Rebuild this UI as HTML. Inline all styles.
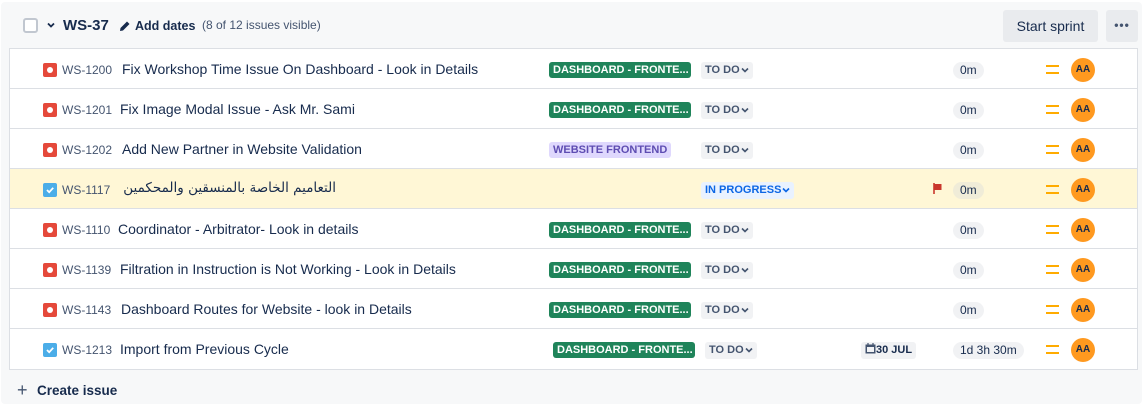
<!DOCTYPE html>
<html><head><meta charset="utf-8"><style>
*{box-sizing:border-box;margin:0;padding:0}
body{width:1142px;height:404px;background:#fff;font-family:"Liberation Sans","DejaVu Sans",sans-serif;color:#172b4d;position:relative;overflow:hidden}
.wrap{position:absolute;left:1px;top:2px;width:1141px;height:402px;background:#f7f8f9;border-radius:4px}
.a{position:absolute;white-space:nowrap}
.tbl{position:absolute;left:9px;top:48px;width:1129px;height:322px;border:1px solid #dcdfe4;background:#fff}
.row{position:absolute;left:0;width:1127px;height:40px;border-bottom:1px solid #dcdfe4;white-space:nowrap}
.row.hl{background:#fff7d6}
.bug{position:absolute;left:33px;top:14px;width:14px;height:14px;background:#e5493a;border-radius:2px}
.bug:after{content:"";position:absolute;left:4px;top:4px;width:6px;height:6px;border-radius:50%;background:#fff}
.task{position:absolute;left:33px;top:14px;width:14px;height:14px;background:#4bade8;border-radius:2px}
.task svg{position:absolute;left:2px;top:2px}
.key{position:absolute;left:52px;top:14px;font-size:12px;color:#44546f}
.sum{position:absolute;top:12px;font-size:14px;color:#172b4d;white-space:nowrap}
.lbl{position:absolute;top:13px;height:16px;line-height:16px;font-size:11px;font-weight:bold;padding:0 4px;border-radius:3px;white-space:nowrap;overflow:hidden}
.g{background:#1f845a;color:#fff;width:142px}
.p{background:#dfd8fd;color:#5e4db2}
.st{position:absolute;top:13px;height:17px;line-height:17px;font-size:11px;font-weight:bold;padding:0 4px;border-radius:3px;background:#f1f2f4;color:#44546f;white-space:nowrap}
.st.ip{background:#e9f2ff;color:#0c66e4}
.st svg{vertical-align:0px;margin-left:1px}
.time{position:absolute;left:943px;top:13px;height:17px;line-height:17px;font-size:12px;padding:0 7px;border-radius:9px;background:#f1f2f4;color:#172b4d}
.hl .time{background:#f0ecd8}
.pri{position:absolute;left:1036px;top:16px;width:13px;height:9px;border-top:2.5px solid #ffab00;border-bottom:2.5px solid #ffab00}
.av{position:absolute;left:1061px;top:9px;width:24px;height:24px;border-radius:50%;background:#ff991f;font-size:10px;font-weight:bold;text-align:center;line-height:24px;color:#172b4d}
</style></head><body>
<div class="wrap"></div>
<div class="a" style="left:23px;top:18px;width:15px;height:15px;border:2px solid #c1c7d0;border-radius:3px;background:#fff"></div>
<svg class="a" style="left:46px;top:20px" width="10" height="10" viewBox="0 0 10 10"><path d="M2 3.5 L5 6.5 L8 3.5" stroke="#172b4d" stroke-width="1.8" fill="none"/></svg>
<div class="a" style="left:63px;top:17px;font-size:15px;font-weight:bold">WS-37</div>
<svg class="a" style="left:119px;top:20px" width="12" height="12" viewBox="0 0 12 12"><path d="M1 11 L1.5 8 L8 1.5 L10.5 4 L4 10.5 Z" fill="#172b4d"/></svg>
<div class="a" style="left:135px;top:19px;font-size:12.5px;font-weight:bold">Add dates</div>
<div class="a" style="left:202px;top:18px;font-size:12px;color:#44546f">(8 of 12 issues visible)</div>
<div class="a" style="left:1003px;top:10px;width:95px;height:32px;background:#e9ebee;border-radius:3px;font-size:14px;line-height:32px;text-align:center;color:#172b4d">Start sprint</div>
<div class="a" style="left:1106px;top:10px;width:32px;height:32px;background:#e9ebee;border-radius:3px;font-size:12px;line-height:31px;text-align:center;font-weight:bold;letter-spacing:1px;color:#44546f">•••</div>

<div class="tbl">
<div class="row" style="top:0"><div class="bug"></div><div class="key">WS-1200</div><div class="sum" style="left:112px">Fix Workshop Time Issue On Dashboard - Look in Details</div><div class="lbl g" style="left:539px">DASHBOARD - FRONTE...</div><div class="st" style="left:691px">TO DO<svg width="8" height="6" viewBox="0 0 8 6"><path d="M1 1.5 L4 4.5 L7 1.5" stroke="#44546f" stroke-width="1.6" fill="none"/></svg></div><div class="time">0m</div><div class="pri"></div><div class="av">AA</div></div>
<div class="row" style="top:40px"><div class="bug"></div><div class="key">WS-1201</div><div class="sum" style="left:110px">Fix Image Modal Issue - Ask Mr. Sami</div><div class="lbl g" style="left:539px">DASHBOARD - FRONTE...</div><div class="st" style="left:691px">TO DO<svg width="8" height="6" viewBox="0 0 8 6"><path d="M1 1.5 L4 4.5 L7 1.5" stroke="#44546f" stroke-width="1.6" fill="none"/></svg></div><div class="time">0m</div><div class="pri"></div><div class="av">AA</div></div>
<div class="row" style="top:80px"><div class="bug"></div><div class="key">WS-1202</div><div class="sum" style="left:112px">Add New Partner in Website Validation</div><div class="lbl p" style="left:539px">WEBSITE FRONTEND</div><div class="st" style="left:691px">TO DO<svg width="8" height="6" viewBox="0 0 8 6"><path d="M1 1.5 L4 4.5 L7 1.5" stroke="#44546f" stroke-width="1.6" fill="none"/></svg></div><div class="time">0m</div><div class="pri"></div><div class="av">AA</div></div>
<div class="row hl" style="top:120px"><div class="task"><svg width="10" height="10" viewBox="0 0 10 10"><path d="M2 5 L4.2 7.2 L8.2 2.8" stroke="#fff" stroke-width="1.8" fill="none"/></svg></div><div class="key">WS-1117</div><div class="sum" dir="rtl" style="left:100px;width:226px;text-align:right;font-family:'DejaVu Sans',sans-serif;font-size:13.5px;top:11px;white-space:nowrap">التعاميم الخاصة بالمنسقين والمحكمين</div><div class="st ip" style="left:691px">IN PROGRESS<svg width="8" height="6" viewBox="0 0 8 6"><path d="M1 1.5 L4 4.5 L7 1.5" stroke="#0c66e4" stroke-width="1.6" fill="none"/></svg></div><svg class="a" style="left:923px;top:14px" width="9" height="11" viewBox="0 0 9 11"><path d="M1 0 V11" stroke="#c9372c" stroke-width="1.6"/><path d="M1.5 1 H8.5 V7 H1.5Z" fill="#c9372c"/></svg><div class="time">0m</div><div class="pri"></div><div class="av">AA</div></div>
<div class="row" style="top:160px"><div class="bug"></div><div class="key">WS-1110</div><div class="sum" style="left:108px">Coordinator - Arbitrator- Look in details</div><div class="lbl g" style="left:539px">DASHBOARD - FRONTE...</div><div class="st" style="left:691px">TO DO<svg width="8" height="6" viewBox="0 0 8 6"><path d="M1 1.5 L4 4.5 L7 1.5" stroke="#44546f" stroke-width="1.6" fill="none"/></svg></div><div class="time">0m</div><div class="pri"></div><div class="av">AA</div></div>
<div class="row" style="top:200px"><div class="bug"></div><div class="key">WS-1139</div><div class="sum" style="left:110px">Filtration in Instruction is Not Working - Look in Details</div><div class="lbl g" style="left:539px">DASHBOARD - FRONTE...</div><div class="st" style="left:691px">TO DO<svg width="8" height="6" viewBox="0 0 8 6"><path d="M1 1.5 L4 4.5 L7 1.5" stroke="#44546f" stroke-width="1.6" fill="none"/></svg></div><div class="time">0m</div><div class="pri"></div><div class="av">AA</div></div>
<div class="row" style="top:240px"><div class="bug"></div><div class="key">WS-1143</div><div class="sum" style="left:111px">Dashboard Routes for Website - look in Details</div><div class="lbl g" style="left:539px">DASHBOARD - FRONTE...</div><div class="st" style="left:691px">TO DO<svg width="8" height="6" viewBox="0 0 8 6"><path d="M1 1.5 L4 4.5 L7 1.5" stroke="#44546f" stroke-width="1.6" fill="none"/></svg></div><div class="time">0m</div><div class="pri"></div><div class="av">AA</div></div>
<div class="row" style="top:280px;border-bottom:none"><div class="task"><svg width="10" height="10" viewBox="0 0 10 10"><path d="M2 5 L4.2 7.2 L8.2 2.8" stroke="#fff" stroke-width="1.8" fill="none"/></svg></div><div class="key">WS-1213</div><div class="sum" style="left:110px">Import from Previous Cycle</div><div class="lbl g" style="left:543px">DASHBOARD - FRONTE...</div><div class="st" style="left:695px">TO DO<svg width="8" height="6" viewBox="0 0 8 6"><path d="M1 1.5 L4 4.5 L7 1.5" stroke="#44546f" stroke-width="1.6" fill="none"/></svg></div>
<div class="a" style="left:851px;top:13px;height:17px;line-height:17px;padding:0 4px;background:#f1f2f4;border-radius:3px;font-size:11px;font-weight:bold;color:#172b4d"><svg width="11" height="11" viewBox="0 0 11 11" style="vertical-align:-1px"><rect x="0.5" y="1.5" width="10" height="9" fill="#44546f"/><rect x="2" y="4" width="7" height="5" fill="#f1f2f4"/><path d="M3 0V3M8 0V3" stroke="#44546f" stroke-width="1.2"/></svg>30 JUL</div>
<div class="time" style="left:943px">1d 3h 30m</div><div class="pri"></div><div class="av">AA</div></div>
</div>
<div class="a" style="left:17px;top:381px;font-size:18px;line-height:18px;color:#44546f">+</div>
<div class="a" style="left:37px;top:383px;font-size:13.5px;font-weight:bold">Create issue</div>
</body></html>
